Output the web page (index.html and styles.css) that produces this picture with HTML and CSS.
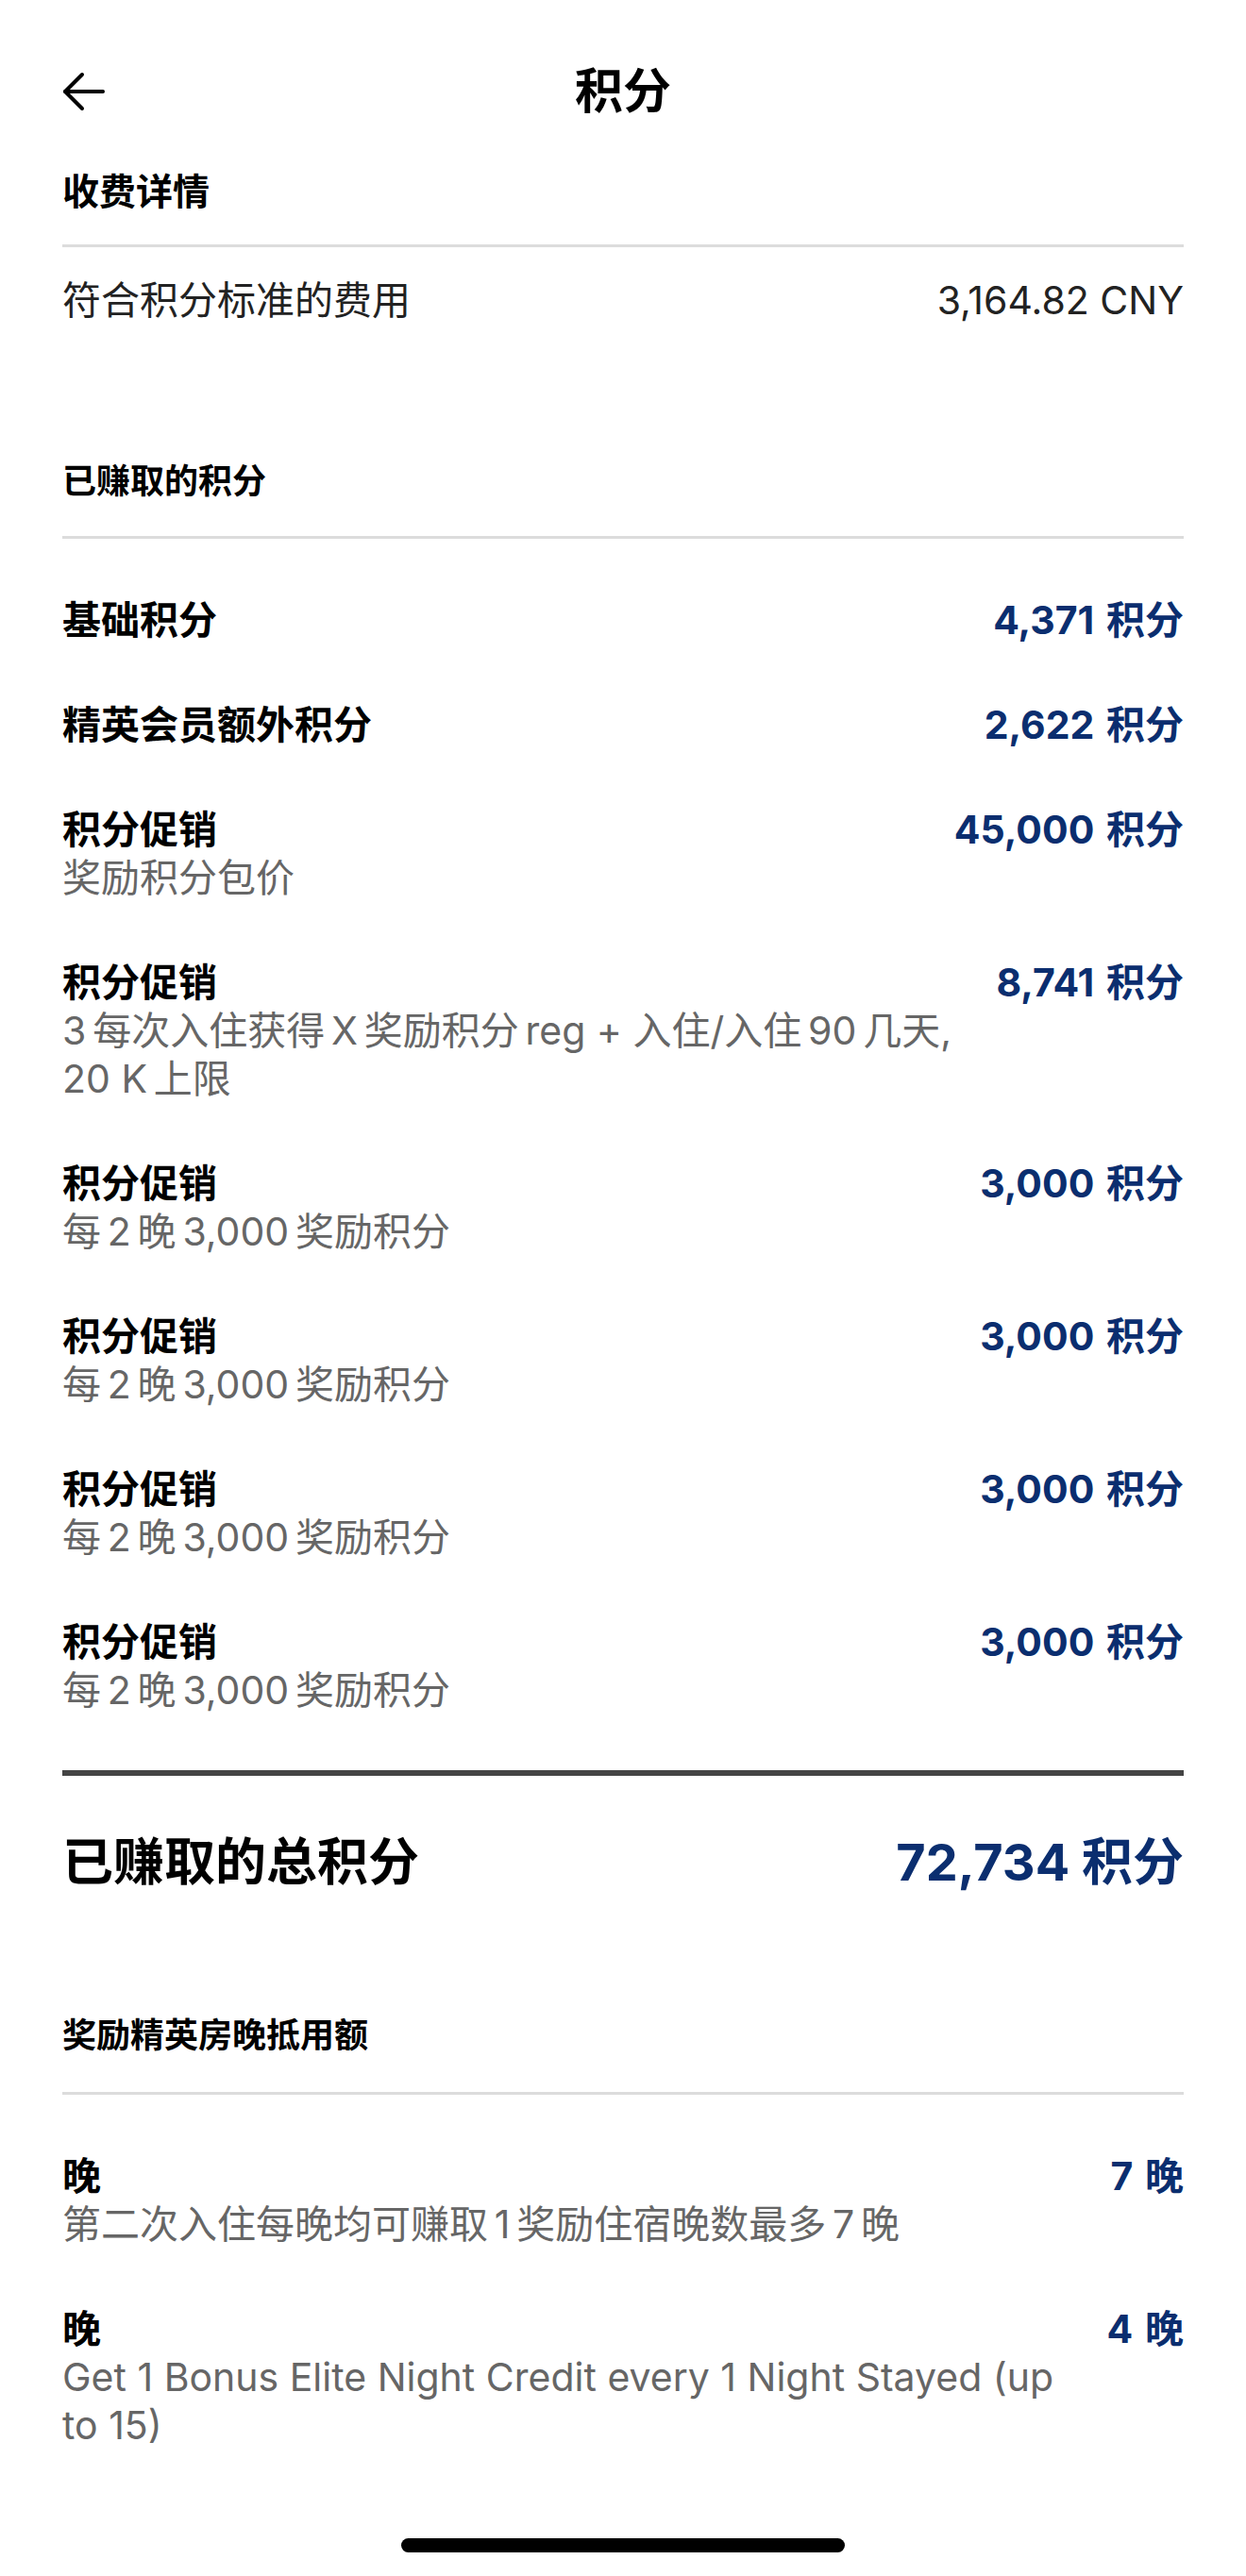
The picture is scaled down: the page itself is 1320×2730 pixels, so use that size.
FILE: index.html
```html
<!DOCTYPE html>
<html lang="zh-CN">
<head>
  <meta charset="UTF-8">
  <meta name="viewport" content="width=device-width, initial-scale=1.0">
  <title>积分</title>
  <link rel="stylesheet" href="styles.css">
</head>
<body>
  <!-- Top Bar -->
  <header class="topbar">
    <button class="back-btn" aria-label="返回">
      <svg width="45" height="42" viewBox="0 0 45 42" fill="none" stroke="#000" stroke-width="4" stroke-linecap="round" stroke-linejoin="round">
        <path d="M43 21H3"/>
        <path d="M21 3L3 21L21 39"/>
      </svg>
    </button>
    <h1 class="title">积分</h1>
    <span class="spacer"></span>
  </header>

  <main class="content">
    <!-- Charges -->
    <section class="section">
      <h2 class="section-title section-title-lg">收费详情</h2>
      <div class="fee-row">
        <span>符合积分标准的费用</span>
        <span>3,164.82 CNY</span>
      </div>
    </section>

    <!-- Earned points -->
    <section class="section section-earned">
      <h2 class="section-title">已赚取的积分</h2>
      <ul class="list" id="points-list"></ul>
    </section>

    <!-- Total -->
    <div class="total">
      <span class="total-label">已赚取的总积分</span>
      <span class="total-value">72,734 积分</span>
    </div>

    <!-- Elite nights -->
    <section class="section section-nights">
      <h2 class="section-title">奖励精英房晚抵用额</h2>
      <ul class="list" id="nights-list"></ul>
    </section>
  </main>

  <div class="home-indicator"></div>

  <script>
  document.addEventListener("DOMContentLoaded", () => {
    const sp = "\u2006"; // small gap between Chinese and Latin, like iOS autospacing

    const points = [
      { name: "基础积分", value: "4,371 积分" },
      { name: "精英会员额外积分", value: "2,622 积分" },
      { name: "积分促销", desc: "奖励积分包价", value: "45,000 积分" },
      { name: "积分促销", desc: `3${sp}每次入住获得${sp}X${sp}奖励积分${sp}reg + 入住/入住${sp}90${sp}几天, 20 K${sp}上限`, value: "8,741 积分" },
      { name: "积分促销", desc: `每${sp}2${sp}晚${sp}3,000${sp}奖励积分`, value: "3,000 积分" },
      { name: "积分促销", desc: `每${sp}2${sp}晚${sp}3,000${sp}奖励积分`, value: "3,000 积分" },
      { name: "积分促销", desc: `每${sp}2${sp}晚${sp}3,000${sp}奖励积分`, value: "3,000 积分" },
      { name: "积分促销", desc: `每${sp}2${sp}晚${sp}3,000${sp}奖励积分`, value: "3,000 积分" }
    ];

    const nights = [
      { name: "晚", desc: `第二次入住每晚均可赚取${sp}1${sp}奖励住宿晚数最多${sp}7${sp}晚`, value: "7 晚" },
      { name: "晚", desc: "Get 1 Bonus Elite Night Credit every 1 Night Stayed (up to 15)", value: "4 晚" }
    ];

    // Build the rows of one list
    function renderList(listElement, items) {
      items.forEach(item => {
        const li = document.createElement("li");
        li.classList.add("item");

        const text = document.createElement("div");
        text.classList.add("item-text");

        const name = document.createElement("div");
        name.classList.add("item-name");
        name.textContent = item.name;
        text.appendChild(name);

        if (item.desc) {
          const desc = document.createElement("div");
          desc.classList.add("item-desc");
          desc.textContent = item.desc;
          text.appendChild(desc);
        }

        const value = document.createElement("div");
        value.classList.add("item-value");
        value.textContent = item.value;

        li.appendChild(text);
        li.appendChild(value);
        listElement.appendChild(li);
      });
    }

    renderList(document.getElementById("points-list"), points);
    renderList(document.getElementById("nights-list"), nights);
  });
  </script>
</body>
</html>
```

FILE: styles.css
```css
/* General Styling */
body {
  margin: 0;
  min-height: 100vh;
  display: flex;
  flex-direction: column;
  font-family: Inter, "Noto Sans CJK SC", sans-serif;
  font-size: 41px;
  color: #111;
  background: #fff;
}

/* Top Bar */
.topbar {
  display: grid;
  grid-template-columns: 45px 1fr 45px;
  align-items: center;
  height: 52px;
  margin: 71px 66px 0;
}

.back-btn {
  display: flex;
  padding: 0;
  border: none;
  background: none;
  cursor: pointer;
}

.title {
  margin: 0;
  text-align: center;
  font-size: 51px;
  font-weight: 700;
  line-height: 52px;
  color: #000;
}

/* Content */
.content {
  padding: 0 66px;
}

.section-title {
  margin: 0;
  padding-bottom: 33px;
  font-size: 36px;
  font-weight: 700;
  line-height: 50px;
  color: #000;
  border-bottom: 3px solid #dcdcdc;
}

.section-title-lg {
  margin-top: 55px;
  padding-bottom: 31px;
  font-size: 39px;
}

.fee-row {
  display: flex;
  justify-content: space-between;
  margin-top: 30px;
  line-height: 52px;
  color: #222;
}

.section-earned {
  margin-top: 141px;
}

.list {
  list-style: none;
  margin: 0;
  padding: 0;
}

.item {
  display: flex;
  justify-content: space-between;
  align-items: flex-start;
  gap: 20px;
  margin-top: 59px;
}

.item:first-child {
  margin-top: 60px;
}

.item-name {
  font-weight: 700;
  line-height: 52px;
  color: #000;
}

.item-desc {
  line-height: 51px;
  color: #666;
}

.item-value {
  flex-shrink: 0;
  font-weight: 700;
  line-height: 52px;
  color: #0b2e6f;
  white-space: nowrap;
  word-spacing: 3px;
}

/* Total */
.total {
  display: flex;
  justify-content: space-between;
  align-items: center;
  margin-top: 59px;
  padding-top: 60px;
  border-top: 6px solid #444;
  font-size: 54px;
  font-weight: 700;
  line-height: 64px;
}

.total-label {
  color: #000;
}

.total-value {
  color: #0b2e6f;
}

.section-nights {
  margin-top: 126px;
}

.section-nights .section-title {
  padding-bottom: 35px;
}

/* Home Indicator */
.home-indicator {
  width: 470px;
  height: 15px;
  margin: auto auto 25px;
  border-radius: 8px;
  background: #000;
}
```
